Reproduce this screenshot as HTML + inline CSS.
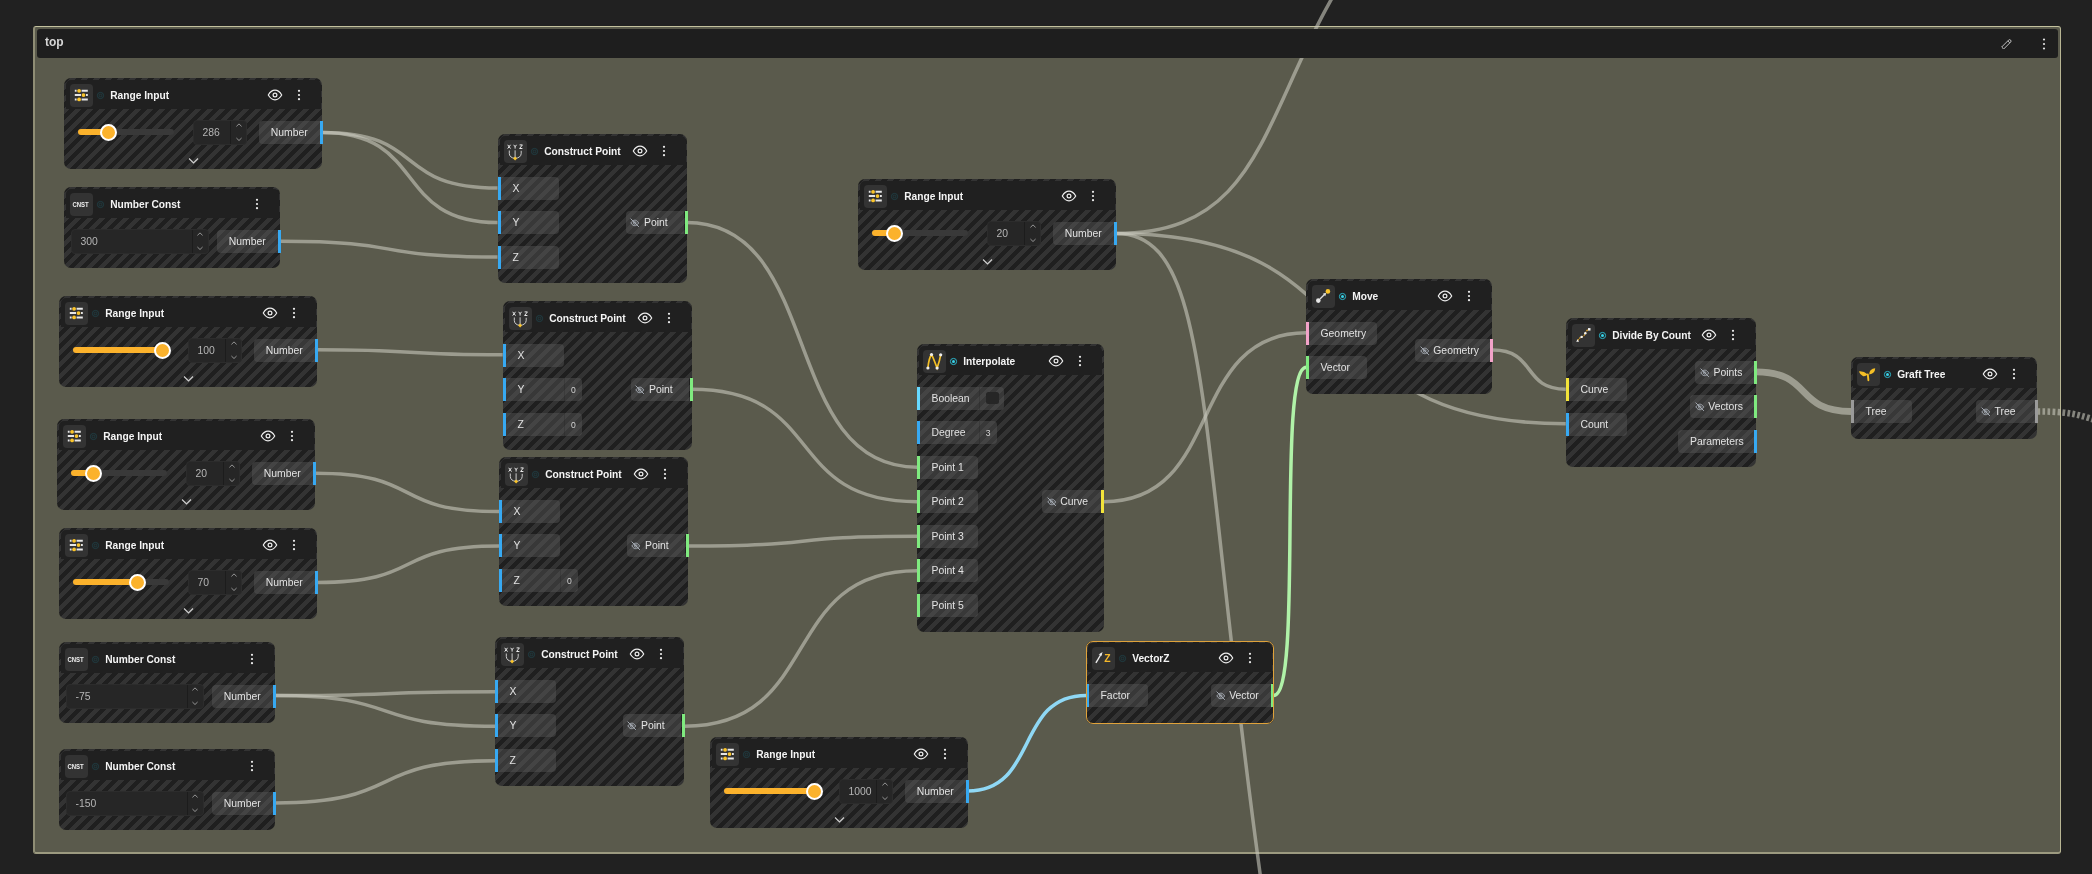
<!DOCTYPE html><html><head><meta charset="utf-8"><title>top</title><style>
*{box-sizing:border-box}
html,body{margin:0;padding:0;width:2092px;height:874px;overflow:hidden;background:#212121;font-family:"Liberation Sans",sans-serif;}
.abs{position:absolute}
.frame{position:absolute;left:33px;top:26px;width:2028px;height:828px;border-style:solid;border-color:#c4c29e #b8b694 #9c9a80 #8f8d75;border-width:1px 1px 2px 2px;border-radius:3px;background:#5a5a4c;}
.fhead{position:absolute;left:37px;top:29px;width:2021px;height:28.5px;background:#1e1e1e;border-radius:3px;z-index:3;will-change:transform}
.fhead .t{position:absolute;left:8px;top:5.8px;font-size:12px;font-weight:700;color:#d6d6d6}
svg.wires{position:absolute;left:0;top:0;z-index:2}
.node{position:absolute;border-radius:7px;will-change:transform;background:repeating-linear-gradient(135deg,#1f1f1f 0 4.25px,#333333 4.25px 8.5px);z-index:4}
.node.sel::after{content:'';position:absolute;left:0;top:0;right:0;bottom:0;border:1px solid #dfa23a;border-radius:7px;pointer-events:none}
.nh{position:absolute;left:1.5px;right:1.5px;top:2px;height:29px;background:#202020;border-radius:5px 5px 0 0}
.ic{position:absolute;left:4.1px;top:3.6px;width:23px;height:23px;border-radius:4px;background:#333333}
.ic svg{position:absolute;left:0;top:0}
.dot{position:absolute;left:29.2px;top:9.7px}
.title{position:absolute;left:44.7px;top:10px;font-size:10.2px;font-weight:700;color:#f4f4f4;white-space:nowrap;line-height:12px}
.eye{position:absolute;top:10px}
.keb{position:absolute;top:9px}
.sock{position:absolute;height:23px;font-size:10.4px;color:#e2e2e2;line-height:23px;white-space:nowrap;background:rgba(96,96,96,0.4)}
.sock.in{border-radius:0 4px 4px 0;padding-left:12px}
.sock.out{border-radius:4px 0 0 4px;padding-left:11.7px;text-align:left}
.sock.out.sl{padding-left:4.7px}
.port{position:absolute;width:3px;height:23px}
.vbox{position:absolute;height:23px;font-size:8.6px;color:#d6d6d6;line-height:24.5px;text-align:center;background:rgba(96,96,96,0.4);border-radius:0 4px 4px 0;border-left:1px solid rgba(0,0,0,0.13)}
.sock.in.hv{border-radius:0}
.field{position:absolute;height:25px;background:#262626;border-radius:4px;border:1px solid #2c2c2c}
.field .v{position:absolute;top:0;line-height:23px;font-size:10.4px;color:#b5b5b5}
.field .div{position:absolute;top:0;bottom:0;width:1px;background:#1c1c1c}
.track{position:absolute;height:6px;border-radius:3px;background:#393939}
.fill{position:absolute;height:6px;border-radius:3px;background:#fbb22c}
.knob{position:absolute;width:17px;height:17px;border-radius:50%;background:#fbb22c;border:2.8px solid #ffffff}
</style></head><body><div class="frame"></div><div class="fhead"><span class="t">top</span><svg class="abs" style="left:1963px;top:8px" width="13" height="13" viewBox="0 0 13 13"><path d="M3 11.3 L1.7 10 L8.6 3.1 Q9.6 2.1 10.6 3.1 Q11.6 4.1 10.6 5.1 L3.7 12 Z M7.8 3.9 L9.8 5.9" fill="none" stroke="#d0d0d0" stroke-width="0.9"/></svg><svg class="abs" style="left:2003.5px;top:7.5px" width="6" height="14" viewBox="0 0 6 14"><circle cx="3" cy="2.5" r="1.1" fill="#e0e0e0"/><circle cx="3" cy="7" r="1.1" fill="#e0e0e0"/><circle cx="3" cy="11.5" r="1.1" fill="#e0e0e0"/></svg></div><svg class="wires" width="2092" height="874" viewBox="0 0 2092 874"><path d="M322.4 132.5 C427.5 132.5 392.4 188.1 497.5 188.1" stroke="rgba(200,200,188,0.6)" stroke-width="3.5" fill="none" /><path d="M322.4 132.5 C427.5 132.5 392.4 222.6 497.5 222.6" stroke="rgba(200,200,188,0.6)" stroke-width="3.5" fill="none" /><path d="M280.4 241.2 C410.7 241.2 367.2 257.1 497.5 257.1" stroke="rgba(200,200,188,0.6)" stroke-width="3.5" fill="none" /><path d="M316.8 349.8 C428.3 349.8 391.2 354.8 502.7 354.8" stroke="rgba(200,200,188,0.6)" stroke-width="3.5" fill="none" /><path d="M314.9 473.2 C425.4 473.2 388.5 511.6 499.0 511.6" stroke="rgba(200,200,188,0.6)" stroke-width="3.5" fill="none" /><path d="M317.2 582.5 C426.3 582.5 389.9 546.1 499.0 546.1" stroke="rgba(200,200,188,0.6)" stroke-width="3.5" fill="none" /><path d="M275.2 695.6 C407.3 695.6 363.3 691.7 495.4 691.7" stroke="rgba(200,200,188,0.6)" stroke-width="3.5" fill="none" /><path d="M275.2 695.6 C407.3 695.6 363.3 726.2 495.4 726.2" stroke="rgba(200,200,188,0.6)" stroke-width="3.5" fill="none" /><path d="M275.2 802.9 C407.3 802.9 363.3 760.7 495.4 760.7" stroke="rgba(200,200,188,0.6)" stroke-width="3.5" fill="none" /><path d="M686.5 222.6 C825.0 222.6 778.8 467.2 917.3 467.2" stroke="rgba(200,200,188,0.6)" stroke-width="3.5" fill="none" /><path d="M691.7 389.3 C827.1 389.3 781.9 501.7 917.3 501.7" stroke="rgba(200,200,188,0.6)" stroke-width="3.5" fill="none" /><path d="M688.0 546.1 C825.6 546.1 779.7 536.2 917.3 536.2" stroke="rgba(200,200,188,0.6)" stroke-width="3.5" fill="none" /><path d="M684.4 726.2 C824.1 726.2 777.6 570.7 917.3 570.7" stroke="rgba(200,200,188,0.6)" stroke-width="3.5" fill="none" /><path d="M1103.8 501.7 C1225.4 501.7 1184.8 332.8 1306.4 332.8" stroke="rgba(200,200,188,0.6)" stroke-width="3.5" fill="none" /><path d="M1115.7 233.5 C1385.7 233.5 1295.7 423.7 1565.7 423.7" stroke="rgba(200,200,188,0.6)" stroke-width="3.5" fill="none" /><path d="M1273.6 695.4 C1303.6 695.4 1276.4 367.3 1306.4 367.3" stroke="#b0f2a8" stroke-width="3.5" fill="none" /><path d="M967.7 791.0 C1038.7 791.0 1015.1 695.4 1086.1 695.4" stroke="#8fd8f5" stroke-width="3.5" fill="none" /><path d="M1492.8 350.1 C1536.5 350.1 1522.0 389.2 1565.7 389.2" stroke="rgba(200,200,188,0.6)" stroke-width="3.5" fill="none" /><path d="M1755.8 371.9 C1813.1 371.9 1794.0 411.5 1851.3 411.5" stroke="rgba(200,200,188,0.6)" stroke-width="6.8" fill="none" /><path d="M1115.7 233.5 C1275.5 233.5 1259.6 92.9 1364.9 -53.6" stroke="rgba(200,200,188,0.6)" stroke-width="3.5" fill="none"/><path d="M1115.7 233.5 C1235.5 233.5 1182.1 507.6 1325.1 1275.7" stroke="rgba(200,200,188,0.6)" stroke-width="3.5" fill="none"/><path d="M2037.3999999999999 411.5 C2077.3999999999996 411.5 2080 415.5 2130 431.5" stroke="rgba(200,200,188,0.6)" stroke-width="6.5" fill="none" stroke-dasharray="2.7 2.3"/></svg><div class="node" style="left:64.4px;top:78.4px;width:258px;height:91px"><div class="nh"><div class="ic"><svg width="23" height="23" viewBox="0 0 23 23"><g stroke="#e6e6e6" stroke-width="2" stroke-linecap="butt"><path d="M4.8 6.8H6.6M11.6 6.8H17.8"/><path d="M4.8 11.1H11M16 11.1H17.8"/><path d="M4.8 15.4H6.6M11.6 15.4H17.8"/></g><g fill="#fbc52a"><circle cx="9.1" cy="6.8" r="1.9"/><circle cx="13.5" cy="11.1" r="1.9"/><circle cx="9.1" cy="15.4" r="1.9"/></g></svg></div><svg class="dot" width="11" height="11" viewBox="0 0 11 11"><circle cx="5.5" cy="5.5" r="3.1" fill="none" stroke="#1f4046" stroke-width="0.9"/><circle cx="5.5" cy="5.5" r="1.3" fill="none" stroke="#1f4046" stroke-width="0.8"/></svg><div class="title">Range Input</div></div><svg class="abs" style="left:202.5px;top:11px" width="16" height="12" viewBox="0 0 16 12"><path d="M1.3 6 C3.5 2.2 5.6 1.2 8 1.2 C10.4 1.2 12.5 2.2 14.7 6 C12.5 9.8 10.4 10.8 8 10.8 C5.6 10.8 3.5 9.8 1.3 6 Z" fill="none" stroke="#eeeeee" stroke-width="1.2"/><circle cx="8" cy="6" r="1.9" fill="none" stroke="#eeeeee" stroke-width="1.2"/></svg><svg class="abs" style="left:231.8px;top:10px" width="6" height="14" viewBox="0 0 6 14"><circle cx="3" cy="2.8" r="1.1" fill="#eeeeee"/><circle cx="3" cy="7" r="1.1" fill="#eeeeee"/><circle cx="3" cy="11.2" r="1.1" fill="#eeeeee"/></svg><div class="track" style="left:14px;top:51.1px;width:96px"></div><div class="fill" style="left:14px;top:51.1px;width:30px"></div><div class="knob" style="left:35.5px;top:45.6px"></div><div class="field" style="left:129px;top:41.6px;width:54px"><div class="v" style="left:8.5px">286</div><div class="div" style="left:36px"></div><svg class="abs" style="left:39.6px;top:-1px" width="10" height="25" viewBox="0 0 10 25"><path d="M2.4 6.4 L5 3.9 L7.6 6.4 M2.4 18 L5 20.5 L7.6 18" fill="none" stroke="#a0a0a0" stroke-width="0.9"/></svg></div><div class="port" style="left:255.5px;top:42.6px;background:#37a9f2"></div><div class="sock out" style="left:195.0px;top:42.6px;width:60.5px">Number</div><svg class="abs" style="left:123.5px;top:79px" width="11" height="8" viewBox="0 0 11 8"><path d="M1 1.5 L5.5 6 L10 1.5" fill="none" stroke="#d0d0d0" stroke-width="1.2"/></svg></div><div class="node" style="left:64.4px;top:187.2px;width:216px;height:81px"><div class="nh"><div class="ic"><svg width="23" height="23" viewBox="0 0 23 23"><text x="2.4" y="13.8" font-family="Liberation Sans" font-weight="700" font-size="8" fill="#eeeeee" textLength="16.4" lengthAdjust="spacingAndGlyphs">CNST</text></svg></div><svg class="dot" width="11" height="11" viewBox="0 0 11 11"><circle cx="5.5" cy="5.5" r="3.1" fill="none" stroke="#1f4046" stroke-width="0.9"/><circle cx="5.5" cy="5.5" r="1.3" fill="none" stroke="#1f4046" stroke-width="0.8"/></svg><div class="title">Number Const</div></div><svg class="abs" style="left:189.8px;top:10px" width="6" height="14" viewBox="0 0 6 14"><circle cx="3" cy="2.8" r="1.1" fill="#eeeeee"/><circle cx="3" cy="7" r="1.1" fill="#eeeeee"/><circle cx="3" cy="11.2" r="1.1" fill="#eeeeee"/></svg><div class="field" style="left:6.5px;top:41.5px;width:138px"><div class="v" style="left:9px">300</div><div class="div" style="left:120.5px"></div><svg class="abs" style="left:123.5px;top:-1px" width="10" height="25" viewBox="0 0 10 25"><path d="M2.4 6.4 L5 3.9 L7.6 6.4 M2.4 18 L5 20.5 L7.6 18" fill="none" stroke="#a0a0a0" stroke-width="0.9"/></svg></div><div class="port" style="left:213.5px;top:42.5px;background:#37a9f2"></div><div class="sock out" style="left:153.0px;top:42.5px;width:60.5px">Number</div></div><div class="node" style="left:58.8px;top:295.7px;width:258px;height:91px"><div class="nh"><div class="ic"><svg width="23" height="23" viewBox="0 0 23 23"><g stroke="#e6e6e6" stroke-width="2" stroke-linecap="butt"><path d="M4.8 6.8H6.6M11.6 6.8H17.8"/><path d="M4.8 11.1H11M16 11.1H17.8"/><path d="M4.8 15.4H6.6M11.6 15.4H17.8"/></g><g fill="#fbc52a"><circle cx="9.1" cy="6.8" r="1.9"/><circle cx="13.5" cy="11.1" r="1.9"/><circle cx="9.1" cy="15.4" r="1.9"/></g></svg></div><svg class="dot" width="11" height="11" viewBox="0 0 11 11"><circle cx="5.5" cy="5.5" r="3.1" fill="none" stroke="#1f4046" stroke-width="0.9"/><circle cx="5.5" cy="5.5" r="1.3" fill="none" stroke="#1f4046" stroke-width="0.8"/></svg><div class="title">Range Input</div></div><svg class="abs" style="left:202.5px;top:11px" width="16" height="12" viewBox="0 0 16 12"><path d="M1.3 6 C3.5 2.2 5.6 1.2 8 1.2 C10.4 1.2 12.5 2.2 14.7 6 C12.5 9.8 10.4 10.8 8 10.8 C5.6 10.8 3.5 9.8 1.3 6 Z" fill="none" stroke="#eeeeee" stroke-width="1.2"/><circle cx="8" cy="6" r="1.9" fill="none" stroke="#eeeeee" stroke-width="1.2"/></svg><svg class="abs" style="left:231.8px;top:10px" width="6" height="14" viewBox="0 0 6 14"><circle cx="3" cy="2.8" r="1.1" fill="#eeeeee"/><circle cx="3" cy="7" r="1.1" fill="#eeeeee"/><circle cx="3" cy="11.2" r="1.1" fill="#eeeeee"/></svg><div class="track" style="left:14px;top:51.1px;width:96px"></div><div class="fill" style="left:14px;top:51.1px;width:89.8px"></div><div class="knob" style="left:95.3px;top:45.6px"></div><div class="field" style="left:129px;top:41.6px;width:54px"><div class="v" style="left:8.5px">100</div><div class="div" style="left:36px"></div><svg class="abs" style="left:39.6px;top:-1px" width="10" height="25" viewBox="0 0 10 25"><path d="M2.4 6.4 L5 3.9 L7.6 6.4 M2.4 18 L5 20.5 L7.6 18" fill="none" stroke="#a0a0a0" stroke-width="0.9"/></svg></div><div class="port" style="left:255.5px;top:42.6px;background:#37a9f2"></div><div class="sock out" style="left:195.0px;top:42.6px;width:60.5px">Number</div><svg class="abs" style="left:123.5px;top:79px" width="11" height="8" viewBox="0 0 11 8"><path d="M1 1.5 L5.5 6 L10 1.5" fill="none" stroke="#d0d0d0" stroke-width="1.2"/></svg></div><div class="node" style="left:56.9px;top:419.1px;width:258px;height:91px"><div class="nh"><div class="ic"><svg width="23" height="23" viewBox="0 0 23 23"><g stroke="#e6e6e6" stroke-width="2" stroke-linecap="butt"><path d="M4.8 6.8H6.6M11.6 6.8H17.8"/><path d="M4.8 11.1H11M16 11.1H17.8"/><path d="M4.8 15.4H6.6M11.6 15.4H17.8"/></g><g fill="#fbc52a"><circle cx="9.1" cy="6.8" r="1.9"/><circle cx="13.5" cy="11.1" r="1.9"/><circle cx="9.1" cy="15.4" r="1.9"/></g></svg></div><svg class="dot" width="11" height="11" viewBox="0 0 11 11"><circle cx="5.5" cy="5.5" r="3.1" fill="none" stroke="#1f4046" stroke-width="0.9"/><circle cx="5.5" cy="5.5" r="1.3" fill="none" stroke="#1f4046" stroke-width="0.8"/></svg><div class="title">Range Input</div></div><svg class="abs" style="left:202.5px;top:11px" width="16" height="12" viewBox="0 0 16 12"><path d="M1.3 6 C3.5 2.2 5.6 1.2 8 1.2 C10.4 1.2 12.5 2.2 14.7 6 C12.5 9.8 10.4 10.8 8 10.8 C5.6 10.8 3.5 9.8 1.3 6 Z" fill="none" stroke="#eeeeee" stroke-width="1.2"/><circle cx="8" cy="6" r="1.9" fill="none" stroke="#eeeeee" stroke-width="1.2"/></svg><svg class="abs" style="left:231.8px;top:10px" width="6" height="14" viewBox="0 0 6 14"><circle cx="3" cy="2.8" r="1.1" fill="#eeeeee"/><circle cx="3" cy="7" r="1.1" fill="#eeeeee"/><circle cx="3" cy="11.2" r="1.1" fill="#eeeeee"/></svg><div class="track" style="left:14px;top:51.1px;width:96px"></div><div class="fill" style="left:14px;top:51.1px;width:22.5px"></div><div class="knob" style="left:28.0px;top:45.6px"></div><div class="field" style="left:129px;top:41.6px;width:54px"><div class="v" style="left:8.5px">20</div><div class="div" style="left:36px"></div><svg class="abs" style="left:39.6px;top:-1px" width="10" height="25" viewBox="0 0 10 25"><path d="M2.4 6.4 L5 3.9 L7.6 6.4 M2.4 18 L5 20.5 L7.6 18" fill="none" stroke="#a0a0a0" stroke-width="0.9"/></svg></div><div class="port" style="left:255.5px;top:42.6px;background:#37a9f2"></div><div class="sock out" style="left:195.0px;top:42.6px;width:60.5px">Number</div><svg class="abs" style="left:123.5px;top:79px" width="11" height="8" viewBox="0 0 11 8"><path d="M1 1.5 L5.5 6 L10 1.5" fill="none" stroke="#d0d0d0" stroke-width="1.2"/></svg></div><div class="node" style="left:59.2px;top:528.4px;width:258px;height:91px"><div class="nh"><div class="ic"><svg width="23" height="23" viewBox="0 0 23 23"><g stroke="#e6e6e6" stroke-width="2" stroke-linecap="butt"><path d="M4.8 6.8H6.6M11.6 6.8H17.8"/><path d="M4.8 11.1H11M16 11.1H17.8"/><path d="M4.8 15.4H6.6M11.6 15.4H17.8"/></g><g fill="#fbc52a"><circle cx="9.1" cy="6.8" r="1.9"/><circle cx="13.5" cy="11.1" r="1.9"/><circle cx="9.1" cy="15.4" r="1.9"/></g></svg></div><svg class="dot" width="11" height="11" viewBox="0 0 11 11"><circle cx="5.5" cy="5.5" r="3.1" fill="none" stroke="#1f4046" stroke-width="0.9"/><circle cx="5.5" cy="5.5" r="1.3" fill="none" stroke="#1f4046" stroke-width="0.8"/></svg><div class="title">Range Input</div></div><svg class="abs" style="left:202.5px;top:11px" width="16" height="12" viewBox="0 0 16 12"><path d="M1.3 6 C3.5 2.2 5.6 1.2 8 1.2 C10.4 1.2 12.5 2.2 14.7 6 C12.5 9.8 10.4 10.8 8 10.8 C5.6 10.8 3.5 9.8 1.3 6 Z" fill="none" stroke="#eeeeee" stroke-width="1.2"/><circle cx="8" cy="6" r="1.9" fill="none" stroke="#eeeeee" stroke-width="1.2"/></svg><svg class="abs" style="left:231.8px;top:10px" width="6" height="14" viewBox="0 0 6 14"><circle cx="3" cy="2.8" r="1.1" fill="#eeeeee"/><circle cx="3" cy="7" r="1.1" fill="#eeeeee"/><circle cx="3" cy="11.2" r="1.1" fill="#eeeeee"/></svg><div class="track" style="left:14px;top:51.1px;width:96px"></div><div class="fill" style="left:14px;top:51.1px;width:64.7px"></div><div class="knob" style="left:70.2px;top:45.6px"></div><div class="field" style="left:129px;top:41.6px;width:54px"><div class="v" style="left:8.5px">70</div><div class="div" style="left:36px"></div><svg class="abs" style="left:39.6px;top:-1px" width="10" height="25" viewBox="0 0 10 25"><path d="M2.4 6.4 L5 3.9 L7.6 6.4 M2.4 18 L5 20.5 L7.6 18" fill="none" stroke="#a0a0a0" stroke-width="0.9"/></svg></div><div class="port" style="left:255.5px;top:42.6px;background:#37a9f2"></div><div class="sock out" style="left:195.0px;top:42.6px;width:60.5px">Number</div><svg class="abs" style="left:123.5px;top:79px" width="11" height="8" viewBox="0 0 11 8"><path d="M1 1.5 L5.5 6 L10 1.5" fill="none" stroke="#d0d0d0" stroke-width="1.2"/></svg></div><div class="node" style="left:59.2px;top:641.6px;width:216px;height:81px"><div class="nh"><div class="ic"><svg width="23" height="23" viewBox="0 0 23 23"><text x="2.4" y="13.8" font-family="Liberation Sans" font-weight="700" font-size="8" fill="#eeeeee" textLength="16.4" lengthAdjust="spacingAndGlyphs">CNST</text></svg></div><svg class="dot" width="11" height="11" viewBox="0 0 11 11"><circle cx="5.5" cy="5.5" r="3.1" fill="none" stroke="#1f4046" stroke-width="0.9"/><circle cx="5.5" cy="5.5" r="1.3" fill="none" stroke="#1f4046" stroke-width="0.8"/></svg><div class="title">Number Const</div></div><svg class="abs" style="left:189.8px;top:10px" width="6" height="14" viewBox="0 0 6 14"><circle cx="3" cy="2.8" r="1.1" fill="#eeeeee"/><circle cx="3" cy="7" r="1.1" fill="#eeeeee"/><circle cx="3" cy="11.2" r="1.1" fill="#eeeeee"/></svg><div class="field" style="left:6.5px;top:41.5px;width:138px"><div class="v" style="left:9px">-75</div><div class="div" style="left:120.5px"></div><svg class="abs" style="left:123.5px;top:-1px" width="10" height="25" viewBox="0 0 10 25"><path d="M2.4 6.4 L5 3.9 L7.6 6.4 M2.4 18 L5 20.5 L7.6 18" fill="none" stroke="#a0a0a0" stroke-width="0.9"/></svg></div><div class="port" style="left:213.5px;top:42.5px;background:#37a9f2"></div><div class="sock out" style="left:153.0px;top:42.5px;width:60.5px">Number</div></div><div class="node" style="left:59.2px;top:748.9px;width:216px;height:81px"><div class="nh"><div class="ic"><svg width="23" height="23" viewBox="0 0 23 23"><text x="2.4" y="13.8" font-family="Liberation Sans" font-weight="700" font-size="8" fill="#eeeeee" textLength="16.4" lengthAdjust="spacingAndGlyphs">CNST</text></svg></div><svg class="dot" width="11" height="11" viewBox="0 0 11 11"><circle cx="5.5" cy="5.5" r="3.1" fill="none" stroke="#1f4046" stroke-width="0.9"/><circle cx="5.5" cy="5.5" r="1.3" fill="none" stroke="#1f4046" stroke-width="0.8"/></svg><div class="title">Number Const</div></div><svg class="abs" style="left:189.8px;top:10px" width="6" height="14" viewBox="0 0 6 14"><circle cx="3" cy="2.8" r="1.1" fill="#eeeeee"/><circle cx="3" cy="7" r="1.1" fill="#eeeeee"/><circle cx="3" cy="11.2" r="1.1" fill="#eeeeee"/></svg><div class="field" style="left:6.5px;top:41.5px;width:138px"><div class="v" style="left:9px">-150</div><div class="div" style="left:120.5px"></div><svg class="abs" style="left:123.5px;top:-1px" width="10" height="25" viewBox="0 0 10 25"><path d="M2.4 6.4 L5 3.9 L7.6 6.4 M2.4 18 L5 20.5 L7.6 18" fill="none" stroke="#a0a0a0" stroke-width="0.9"/></svg></div><div class="port" style="left:213.5px;top:42.5px;background:#37a9f2"></div><div class="sock out" style="left:153.0px;top:42.5px;width:60.5px">Number</div></div><div class="node" style="left:497.5px;top:133.8px;width:189px;height:149.3px"><div class="nh"><div class="ic"><svg width="23" height="23" viewBox="0 0 23 23"><path d="M3.7 4.8 L6.5 8.6 M6.5 4.8 L3.7 8.6 M9.7 4.8 L11.1 6.8 L12.5 4.8 M11.1 6.8 V8.6 M15.6 4.9 H18.4 L15.6 8.5 H18.4" fill="none" stroke="#e8e8e8" stroke-width="1"/><path d="M5.3 10.5 V13.5 Q5.5 17.8 11.1 18.4 Q16.9 17.8 17.2 13.5 V10.8 M11.1 10.3 V18" fill="none" stroke="#dddddd" stroke-width="0.9"/><rect x="9.7" y="17" width="2.8" height="2.8" transform="rotate(45 11.1 18.4)" fill="#fbc52a"/></svg></div><svg class="dot" width="11" height="11" viewBox="0 0 11 11"><circle cx="5.5" cy="5.5" r="3.1" fill="none" stroke="#1f4046" stroke-width="0.9"/><circle cx="5.5" cy="5.5" r="1.3" fill="none" stroke="#1f4046" stroke-width="0.8"/></svg><div class="title">Construct Point</div></div><svg class="abs" style="left:133.5px;top:11px" width="16" height="12" viewBox="0 0 16 12"><path d="M1.3 6 C3.5 2.2 5.6 1.2 8 1.2 C10.4 1.2 12.5 2.2 14.7 6 C12.5 9.8 10.4 10.8 8 10.8 C5.6 10.8 3.5 9.8 1.3 6 Z" fill="none" stroke="#eeeeee" stroke-width="1.2"/><circle cx="8" cy="6" r="1.9" fill="none" stroke="#eeeeee" stroke-width="1.2"/></svg><svg class="abs" style="left:162.8px;top:10px" width="6" height="14" viewBox="0 0 6 14"><circle cx="3" cy="2.8" r="1.1" fill="#eeeeee"/><circle cx="3" cy="7" r="1.1" fill="#eeeeee"/><circle cx="3" cy="11.2" r="1.1" fill="#eeeeee"/></svg><div class="port" style="left:-0.5px;top:42.8px;background:#37a9f2"></div><div class="sock in" style="left:2.5px;top:42.8px;width:58.7px">X</div><div class="port" style="left:-0.5px;top:77.3px;background:#37a9f2"></div><div class="sock in" style="left:2.5px;top:77.3px;width:58.7px">Y</div><div class="port" style="left:-0.5px;top:111.8px;background:#37a9f2"></div><div class="sock in" style="left:2.5px;top:111.8px;width:58.7px">Z</div><div class="port" style="left:186.5px;top:77.3px;background:#7fea7f"></div><div class="sock out sl" style="left:127.8px;top:77.3px;width:58.7px"><svg style="position:relative;top:1.5px;margin-right:4px" width="9.5" height="9.5" viewBox="0 0 10 10"><path d="M0.9 5.2 C2.4 2.9 3.7 2.3 5 2.3 C6.3 2.3 7.6 2.9 9.1 5.2 C7.6 7.5 6.3 8.1 5 8.1 C3.7 8.1 2.4 7.5 0.9 5.2Z" fill="none" stroke="#a3a9b1" stroke-width="1.05"/><circle cx="5" cy="5.2" r="1.3" fill="none" stroke="#a3a9b1" stroke-width="1.05"/><path d="M0.6 0.6 L9.4 9.4" stroke="#a3a9b1" stroke-width="1.05"/></svg>Point</div></div><div class="node" style="left:502.7px;top:300.5px;width:189px;height:149.3px"><div class="nh"><div class="ic"><svg width="23" height="23" viewBox="0 0 23 23"><path d="M3.7 4.8 L6.5 8.6 M6.5 4.8 L3.7 8.6 M9.7 4.8 L11.1 6.8 L12.5 4.8 M11.1 6.8 V8.6 M15.6 4.9 H18.4 L15.6 8.5 H18.4" fill="none" stroke="#e8e8e8" stroke-width="1"/><path d="M5.3 10.5 V13.5 Q5.5 17.8 11.1 18.4 Q16.9 17.8 17.2 13.5 V10.8 M11.1 10.3 V18" fill="none" stroke="#dddddd" stroke-width="0.9"/><rect x="9.7" y="17" width="2.8" height="2.8" transform="rotate(45 11.1 18.4)" fill="#fbc52a"/></svg></div><svg class="dot" width="11" height="11" viewBox="0 0 11 11"><circle cx="5.5" cy="5.5" r="3.1" fill="none" stroke="#1f4046" stroke-width="0.9"/><circle cx="5.5" cy="5.5" r="1.3" fill="none" stroke="#1f4046" stroke-width="0.8"/></svg><div class="title">Construct Point</div></div><svg class="abs" style="left:133.5px;top:11px" width="16" height="12" viewBox="0 0 16 12"><path d="M1.3 6 C3.5 2.2 5.6 1.2 8 1.2 C10.4 1.2 12.5 2.2 14.7 6 C12.5 9.8 10.4 10.8 8 10.8 C5.6 10.8 3.5 9.8 1.3 6 Z" fill="none" stroke="#eeeeee" stroke-width="1.2"/><circle cx="8" cy="6" r="1.9" fill="none" stroke="#eeeeee" stroke-width="1.2"/></svg><svg class="abs" style="left:162.8px;top:10px" width="6" height="14" viewBox="0 0 6 14"><circle cx="3" cy="2.8" r="1.1" fill="#eeeeee"/><circle cx="3" cy="7" r="1.1" fill="#eeeeee"/><circle cx="3" cy="11.2" r="1.1" fill="#eeeeee"/></svg><div class="port" style="left:-0.5px;top:42.8px;background:#37a9f2"></div><div class="sock in" style="left:2.5px;top:42.8px;width:58.7px">X</div><div class="port" style="left:-0.5px;top:77.3px;background:#37a9f2"></div><div class="sock in hv" style="left:2.5px;top:77.3px;width:58.7px">Y</div><div class="vbox" style="left:61.2px;top:77.3px;width:17.6px">0</div><div class="port" style="left:-0.5px;top:111.8px;background:#37a9f2"></div><div class="sock in hv" style="left:2.5px;top:111.8px;width:58.7px">Z</div><div class="vbox" style="left:61.2px;top:111.8px;width:17.6px">0</div><div class="port" style="left:186.5px;top:77.3px;background:#7fea7f"></div><div class="sock out sl" style="left:127.8px;top:77.3px;width:58.7px"><svg style="position:relative;top:1.5px;margin-right:4px" width="9.5" height="9.5" viewBox="0 0 10 10"><path d="M0.9 5.2 C2.4 2.9 3.7 2.3 5 2.3 C6.3 2.3 7.6 2.9 9.1 5.2 C7.6 7.5 6.3 8.1 5 8.1 C3.7 8.1 2.4 7.5 0.9 5.2Z" fill="none" stroke="#a3a9b1" stroke-width="1.05"/><circle cx="5" cy="5.2" r="1.3" fill="none" stroke="#a3a9b1" stroke-width="1.05"/><path d="M0.6 0.6 L9.4 9.4" stroke="#a3a9b1" stroke-width="1.05"/></svg>Point</div></div><div class="node" style="left:499.0px;top:457.3px;width:189px;height:149.3px"><div class="nh"><div class="ic"><svg width="23" height="23" viewBox="0 0 23 23"><path d="M3.7 4.8 L6.5 8.6 M6.5 4.8 L3.7 8.6 M9.7 4.8 L11.1 6.8 L12.5 4.8 M11.1 6.8 V8.6 M15.6 4.9 H18.4 L15.6 8.5 H18.4" fill="none" stroke="#e8e8e8" stroke-width="1"/><path d="M5.3 10.5 V13.5 Q5.5 17.8 11.1 18.4 Q16.9 17.8 17.2 13.5 V10.8 M11.1 10.3 V18" fill="none" stroke="#dddddd" stroke-width="0.9"/><rect x="9.7" y="17" width="2.8" height="2.8" transform="rotate(45 11.1 18.4)" fill="#fbc52a"/></svg></div><svg class="dot" width="11" height="11" viewBox="0 0 11 11"><circle cx="5.5" cy="5.5" r="3.1" fill="none" stroke="#1f4046" stroke-width="0.9"/><circle cx="5.5" cy="5.5" r="1.3" fill="none" stroke="#1f4046" stroke-width="0.8"/></svg><div class="title">Construct Point</div></div><svg class="abs" style="left:133.5px;top:11px" width="16" height="12" viewBox="0 0 16 12"><path d="M1.3 6 C3.5 2.2 5.6 1.2 8 1.2 C10.4 1.2 12.5 2.2 14.7 6 C12.5 9.8 10.4 10.8 8 10.8 C5.6 10.8 3.5 9.8 1.3 6 Z" fill="none" stroke="#eeeeee" stroke-width="1.2"/><circle cx="8" cy="6" r="1.9" fill="none" stroke="#eeeeee" stroke-width="1.2"/></svg><svg class="abs" style="left:162.8px;top:10px" width="6" height="14" viewBox="0 0 6 14"><circle cx="3" cy="2.8" r="1.1" fill="#eeeeee"/><circle cx="3" cy="7" r="1.1" fill="#eeeeee"/><circle cx="3" cy="11.2" r="1.1" fill="#eeeeee"/></svg><div class="port" style="left:-0.5px;top:42.8px;background:#37a9f2"></div><div class="sock in" style="left:2.5px;top:42.8px;width:58.7px">X</div><div class="port" style="left:-0.5px;top:77.3px;background:#37a9f2"></div><div class="sock in" style="left:2.5px;top:77.3px;width:58.7px">Y</div><div class="port" style="left:-0.5px;top:111.8px;background:#37a9f2"></div><div class="sock in hv" style="left:2.5px;top:111.8px;width:58.7px">Z</div><div class="vbox" style="left:61.2px;top:111.8px;width:17.6px">0</div><div class="port" style="left:186.5px;top:77.3px;background:#7fea7f"></div><div class="sock out sl" style="left:127.8px;top:77.3px;width:58.7px"><svg style="position:relative;top:1.5px;margin-right:4px" width="9.5" height="9.5" viewBox="0 0 10 10"><path d="M0.9 5.2 C2.4 2.9 3.7 2.3 5 2.3 C6.3 2.3 7.6 2.9 9.1 5.2 C7.6 7.5 6.3 8.1 5 8.1 C3.7 8.1 2.4 7.5 0.9 5.2Z" fill="none" stroke="#a3a9b1" stroke-width="1.05"/><circle cx="5" cy="5.2" r="1.3" fill="none" stroke="#a3a9b1" stroke-width="1.05"/><path d="M0.6 0.6 L9.4 9.4" stroke="#a3a9b1" stroke-width="1.05"/></svg>Point</div></div><div class="node" style="left:495.4px;top:637.4px;width:189px;height:149.3px"><div class="nh"><div class="ic"><svg width="23" height="23" viewBox="0 0 23 23"><path d="M3.7 4.8 L6.5 8.6 M6.5 4.8 L3.7 8.6 M9.7 4.8 L11.1 6.8 L12.5 4.8 M11.1 6.8 V8.6 M15.6 4.9 H18.4 L15.6 8.5 H18.4" fill="none" stroke="#e8e8e8" stroke-width="1"/><path d="M5.3 10.5 V13.5 Q5.5 17.8 11.1 18.4 Q16.9 17.8 17.2 13.5 V10.8 M11.1 10.3 V18" fill="none" stroke="#dddddd" stroke-width="0.9"/><rect x="9.7" y="17" width="2.8" height="2.8" transform="rotate(45 11.1 18.4)" fill="#fbc52a"/></svg></div><svg class="dot" width="11" height="11" viewBox="0 0 11 11"><circle cx="5.5" cy="5.5" r="3.1" fill="none" stroke="#1f4046" stroke-width="0.9"/><circle cx="5.5" cy="5.5" r="1.3" fill="none" stroke="#1f4046" stroke-width="0.8"/></svg><div class="title">Construct Point</div></div><svg class="abs" style="left:133.5px;top:11px" width="16" height="12" viewBox="0 0 16 12"><path d="M1.3 6 C3.5 2.2 5.6 1.2 8 1.2 C10.4 1.2 12.5 2.2 14.7 6 C12.5 9.8 10.4 10.8 8 10.8 C5.6 10.8 3.5 9.8 1.3 6 Z" fill="none" stroke="#eeeeee" stroke-width="1.2"/><circle cx="8" cy="6" r="1.9" fill="none" stroke="#eeeeee" stroke-width="1.2"/></svg><svg class="abs" style="left:162.8px;top:10px" width="6" height="14" viewBox="0 0 6 14"><circle cx="3" cy="2.8" r="1.1" fill="#eeeeee"/><circle cx="3" cy="7" r="1.1" fill="#eeeeee"/><circle cx="3" cy="11.2" r="1.1" fill="#eeeeee"/></svg><div class="port" style="left:-0.5px;top:42.8px;background:#37a9f2"></div><div class="sock in" style="left:2.5px;top:42.8px;width:58.7px">X</div><div class="port" style="left:-0.5px;top:77.3px;background:#37a9f2"></div><div class="sock in" style="left:2.5px;top:77.3px;width:58.7px">Y</div><div class="port" style="left:-0.5px;top:111.8px;background:#37a9f2"></div><div class="sock in" style="left:2.5px;top:111.8px;width:58.7px">Z</div><div class="port" style="left:186.5px;top:77.3px;background:#7fea7f"></div><div class="sock out sl" style="left:127.8px;top:77.3px;width:58.7px"><svg style="position:relative;top:1.5px;margin-right:4px" width="9.5" height="9.5" viewBox="0 0 10 10"><path d="M0.9 5.2 C2.4 2.9 3.7 2.3 5 2.3 C6.3 2.3 7.6 2.9 9.1 5.2 C7.6 7.5 6.3 8.1 5 8.1 C3.7 8.1 2.4 7.5 0.9 5.2Z" fill="none" stroke="#a3a9b1" stroke-width="1.05"/><circle cx="5" cy="5.2" r="1.3" fill="none" stroke="#a3a9b1" stroke-width="1.05"/><path d="M0.6 0.6 L9.4 9.4" stroke="#a3a9b1" stroke-width="1.05"/></svg>Point</div></div><div class="node" style="left:857.7px;top:179.4px;width:258px;height:91px"><div class="nh"><div class="ic"><svg width="23" height="23" viewBox="0 0 23 23"><g stroke="#e6e6e6" stroke-width="2" stroke-linecap="butt"><path d="M4.8 6.8H6.6M11.6 6.8H17.8"/><path d="M4.8 11.1H11M16 11.1H17.8"/><path d="M4.8 15.4H6.6M11.6 15.4H17.8"/></g><g fill="#fbc52a"><circle cx="9.1" cy="6.8" r="1.9"/><circle cx="13.5" cy="11.1" r="1.9"/><circle cx="9.1" cy="15.4" r="1.9"/></g></svg></div><svg class="dot" width="11" height="11" viewBox="0 0 11 11"><circle cx="5.5" cy="5.5" r="3.1" fill="none" stroke="#1f4046" stroke-width="0.9"/><circle cx="5.5" cy="5.5" r="1.3" fill="none" stroke="#1f4046" stroke-width="0.8"/></svg><div class="title">Range Input</div></div><svg class="abs" style="left:202.5px;top:11px" width="16" height="12" viewBox="0 0 16 12"><path d="M1.3 6 C3.5 2.2 5.6 1.2 8 1.2 C10.4 1.2 12.5 2.2 14.7 6 C12.5 9.8 10.4 10.8 8 10.8 C5.6 10.8 3.5 9.8 1.3 6 Z" fill="none" stroke="#eeeeee" stroke-width="1.2"/><circle cx="8" cy="6" r="1.9" fill="none" stroke="#eeeeee" stroke-width="1.2"/></svg><svg class="abs" style="left:231.8px;top:10px" width="6" height="14" viewBox="0 0 6 14"><circle cx="3" cy="2.8" r="1.1" fill="#eeeeee"/><circle cx="3" cy="7" r="1.1" fill="#eeeeee"/><circle cx="3" cy="11.2" r="1.1" fill="#eeeeee"/></svg><div class="track" style="left:14px;top:51.1px;width:96px"></div><div class="fill" style="left:14px;top:51.1px;width:22.799999999999997px"></div><div class="knob" style="left:28.299999999999997px;top:45.6px"></div><div class="field" style="left:129px;top:41.6px;width:54px"><div class="v" style="left:8.5px">20</div><div class="div" style="left:36px"></div><svg class="abs" style="left:39.6px;top:-1px" width="10" height="25" viewBox="0 0 10 25"><path d="M2.4 6.4 L5 3.9 L7.6 6.4 M2.4 18 L5 20.5 L7.6 18" fill="none" stroke="#a0a0a0" stroke-width="0.9"/></svg></div><div class="port" style="left:255.5px;top:42.6px;background:#37a9f2"></div><div class="sock out" style="left:195.0px;top:42.6px;width:60.5px">Number</div><svg class="abs" style="left:123.5px;top:79px" width="11" height="8" viewBox="0 0 11 8"><path d="M1 1.5 L5.5 6 L10 1.5" fill="none" stroke="#d0d0d0" stroke-width="1.2"/></svg></div><div class="node" style="left:709.7px;top:736.9px;width:258px;height:91px"><div class="nh"><div class="ic"><svg width="23" height="23" viewBox="0 0 23 23"><g stroke="#e6e6e6" stroke-width="2" stroke-linecap="butt"><path d="M4.8 6.8H6.6M11.6 6.8H17.8"/><path d="M4.8 11.1H11M16 11.1H17.8"/><path d="M4.8 15.4H6.6M11.6 15.4H17.8"/></g><g fill="#fbc52a"><circle cx="9.1" cy="6.8" r="1.9"/><circle cx="13.5" cy="11.1" r="1.9"/><circle cx="9.1" cy="15.4" r="1.9"/></g></svg></div><svg class="dot" width="11" height="11" viewBox="0 0 11 11"><circle cx="5.5" cy="5.5" r="3.1" fill="none" stroke="#1f4046" stroke-width="0.9"/><circle cx="5.5" cy="5.5" r="1.3" fill="none" stroke="#1f4046" stroke-width="0.8"/></svg><div class="title">Range Input</div></div><svg class="abs" style="left:202.5px;top:11px" width="16" height="12" viewBox="0 0 16 12"><path d="M1.3 6 C3.5 2.2 5.6 1.2 8 1.2 C10.4 1.2 12.5 2.2 14.7 6 C12.5 9.8 10.4 10.8 8 10.8 C5.6 10.8 3.5 9.8 1.3 6 Z" fill="none" stroke="#eeeeee" stroke-width="1.2"/><circle cx="8" cy="6" r="1.9" fill="none" stroke="#eeeeee" stroke-width="1.2"/></svg><svg class="abs" style="left:231.8px;top:10px" width="6" height="14" viewBox="0 0 6 14"><circle cx="3" cy="2.8" r="1.1" fill="#eeeeee"/><circle cx="3" cy="7" r="1.1" fill="#eeeeee"/><circle cx="3" cy="11.2" r="1.1" fill="#eeeeee"/></svg><div class="track" style="left:14px;top:51.1px;width:96px"></div><div class="fill" style="left:14px;top:51.1px;width:90.3px"></div><div class="knob" style="left:95.8px;top:45.6px"></div><div class="field" style="left:129px;top:41.6px;width:54px"><div class="v" style="left:8.5px">1000</div><div class="div" style="left:36px"></div><svg class="abs" style="left:39.6px;top:-1px" width="10" height="25" viewBox="0 0 10 25"><path d="M2.4 6.4 L5 3.9 L7.6 6.4 M2.4 18 L5 20.5 L7.6 18" fill="none" stroke="#a0a0a0" stroke-width="0.9"/></svg></div><div class="port" style="left:255.5px;top:42.6px;background:#37a9f2"></div><div class="sock out" style="left:195.0px;top:42.6px;width:60.5px">Number</div><svg class="abs" style="left:123.5px;top:79px" width="11" height="8" viewBox="0 0 11 8"><path d="M1 1.5 L5.5 6 L10 1.5" fill="none" stroke="#d0d0d0" stroke-width="1.2"/></svg></div><div class="node" style="left:917.3px;top:343.9px;width:186.5px;height:287.5px"><div class="nh"><div class="ic"><svg width="23" height="23" viewBox="0 0 23 23"><path d="M4.9 18 C5.5 12 6.5 7 8.5 4.6 C10.5 8 12.5 14 14.1 18 C15.5 14 17 9 17.7 4.8" fill="none" stroke="#f5c025" stroke-width="1.7"/><g fill="#eeeeee"><circle cx="4.9" cy="18" r="1.6"/><circle cx="8.5" cy="4.6" r="1.6"/><circle cx="14.1" cy="18" r="1.6"/><circle cx="17.7" cy="4.8" r="1.6"/></g></svg></div><svg class="dot" width="11" height="11" viewBox="0 0 11 11"><circle cx="5.5" cy="5.5" r="3.1" fill="none" stroke="#2cb4c9" stroke-width="1"/><circle cx="5.5" cy="5.5" r="1.5" fill="#38d2e8"/></svg><div class="title">Interpolate</div></div><svg class="abs" style="left:131.0px;top:11px" width="16" height="12" viewBox="0 0 16 12"><path d="M1.3 6 C3.5 2.2 5.6 1.2 8 1.2 C10.4 1.2 12.5 2.2 14.7 6 C12.5 9.8 10.4 10.8 8 10.8 C5.6 10.8 3.5 9.8 1.3 6 Z" fill="none" stroke="#eeeeee" stroke-width="1.2"/><circle cx="8" cy="6" r="1.9" fill="none" stroke="#eeeeee" stroke-width="1.2"/></svg><svg class="abs" style="left:160.3px;top:10px" width="6" height="14" viewBox="0 0 6 14"><circle cx="3" cy="2.8" r="1.1" fill="#eeeeee"/><circle cx="3" cy="7" r="1.1" fill="#eeeeee"/><circle cx="3" cy="11.2" r="1.1" fill="#eeeeee"/></svg><div class="port" style="left:-0.5px;top:42.8px;background:#66d9ff"></div><div class="sock in hv" style="left:2.5px;top:42.8px;width:59.5px">Boolean</div><div class="vbox" style="left:62px;top:42.8px;width:24.5px"><div style="position:absolute;left:5.5px;top:5px;width:13px;height:12.5px;border-radius:2.5px;background:#262626"></div></div><div class="port" style="left:-0.5px;top:77.3px;background:#37a9f2"></div><div class="sock in hv" style="left:2.5px;top:77.3px;width:59.5px">Degree</div><div class="vbox" style="left:62px;top:77.3px;width:17.5px">3</div><div class="port" style="left:-0.5px;top:111.8px;background:#7fea7f"></div><div class="sock in" style="left:2.5px;top:111.8px;width:58.7px">Point 1</div><div class="port" style="left:-0.5px;top:146.3px;background:#7fea7f"></div><div class="sock in" style="left:2.5px;top:146.3px;width:58.7px">Point 2</div><div class="port" style="left:-0.5px;top:180.8px;background:#7fea7f"></div><div class="sock in" style="left:2.5px;top:180.8px;width:58.7px">Point 3</div><div class="port" style="left:-0.5px;top:215.3px;background:#7fea7f"></div><div class="sock in" style="left:2.5px;top:215.3px;width:58.7px">Point 4</div><div class="port" style="left:-0.5px;top:249.8px;background:#7fea7f"></div><div class="sock in" style="left:2.5px;top:249.8px;width:58.7px">Point 5</div><div class="port" style="left:184.0px;top:146.3px;background:#f2e33a"></div><div class="sock out sl" style="left:125.0px;top:146.3px;width:59px"><svg style="position:relative;top:1.5px;margin-right:4px" width="9.5" height="9.5" viewBox="0 0 10 10"><path d="M0.9 5.2 C2.4 2.9 3.7 2.3 5 2.3 C6.3 2.3 7.6 2.9 9.1 5.2 C7.6 7.5 6.3 8.1 5 8.1 C3.7 8.1 2.4 7.5 0.9 5.2Z" fill="none" stroke="#a3a9b1" stroke-width="1.05"/><circle cx="5" cy="5.2" r="1.3" fill="none" stroke="#a3a9b1" stroke-width="1.05"/><path d="M0.6 0.6 L9.4 9.4" stroke="#a3a9b1" stroke-width="1.05"/></svg>Curve</div></div><div class="node" style="left:1306.4px;top:278.5px;width:186.4px;height:115px"><div class="nh"><div class="ic"><svg width="23" height="23" viewBox="0 0 23 23"><path d="M8 14 L13.2 8.8" stroke="#dddddd" stroke-width="1.3"/><path d="M10.8 8.7 L14.2 7.8 L13.3 11.2Z" fill="#dddddd"/><circle cx="6.3" cy="15.6" r="2.3" fill="#e6e6e6"/><circle cx="15.9" cy="6.4" r="2.3" fill="#fbc52a"/></svg></div><svg class="dot" width="11" height="11" viewBox="0 0 11 11"><circle cx="5.5" cy="5.5" r="3.1" fill="none" stroke="#2cb4c9" stroke-width="1"/><circle cx="5.5" cy="5.5" r="1.5" fill="#38d2e8"/></svg><div class="title">Move</div></div><svg class="abs" style="left:130.9px;top:11px" width="16" height="12" viewBox="0 0 16 12"><path d="M1.3 6 C3.5 2.2 5.6 1.2 8 1.2 C10.4 1.2 12.5 2.2 14.7 6 C12.5 9.8 10.4 10.8 8 10.8 C5.6 10.8 3.5 9.8 1.3 6 Z" fill="none" stroke="#eeeeee" stroke-width="1.2"/><circle cx="8" cy="6" r="1.9" fill="none" stroke="#eeeeee" stroke-width="1.2"/></svg><svg class="abs" style="left:160.20000000000002px;top:10px" width="6" height="14" viewBox="0 0 6 14"><circle cx="3" cy="2.8" r="1.1" fill="#eeeeee"/><circle cx="3" cy="7" r="1.1" fill="#eeeeee"/><circle cx="3" cy="11.2" r="1.1" fill="#eeeeee"/></svg><div class="port" style="left:-0.5px;top:42.8px;background:#f3a3c9"></div><div class="sock in" style="left:2.5px;top:42.8px;width:68.4px">Geometry</div><div class="port" style="left:-0.5px;top:77.3px;background:#7fea7f"></div><div class="sock in" style="left:2.5px;top:77.3px;width:58.6px">Vector</div><div class="port" style="left:183.9px;top:60.05px;background:#f3a3c9"></div><div class="sock out sl" style="left:109.10000000000001px;top:60.05px;width:74.8px"><svg style="position:relative;top:1.5px;margin-right:4px" width="9.5" height="9.5" viewBox="0 0 10 10"><path d="M0.9 5.2 C2.4 2.9 3.7 2.3 5 2.3 C6.3 2.3 7.6 2.9 9.1 5.2 C7.6 7.5 6.3 8.1 5 8.1 C3.7 8.1 2.4 7.5 0.9 5.2Z" fill="none" stroke="#a3a9b1" stroke-width="1.05"/><circle cx="5" cy="5.2" r="1.3" fill="none" stroke="#a3a9b1" stroke-width="1.05"/><path d="M0.6 0.6 L9.4 9.4" stroke="#a3a9b1" stroke-width="1.05"/></svg>Geometry</div></div><div class="node" style="left:1565.7px;top:317.6px;width:190.1px;height:148.7px"><div class="nh"><div class="ic"><svg width="23" height="23" viewBox="0 0 23 23"><path d="M5.6 16.9 Q7 14 9.6 12.9 Q12.5 12 13.3 9.2 Q14.5 6 17.2 5.3" fill="none" stroke="#e0a52a" stroke-width="1.2" stroke-dasharray="1.8 0.9"/><g fill="#f2f2f2"><path d="M5.6 15.3 L7 17.8 L4.2 17.8Z"/><circle cx="9.6" cy="12.9" r="1.2"/><circle cx="13.3" cy="9.2" r="1.2"/><rect x="16" y="4.1" width="2.5" height="2.5"/></g></svg></div><svg class="dot" width="11" height="11" viewBox="0 0 11 11"><circle cx="5.5" cy="5.5" r="3.1" fill="none" stroke="#2cb4c9" stroke-width="1"/><circle cx="5.5" cy="5.5" r="1.5" fill="#38d2e8"/></svg><div class="title">Divide By Count</div></div><svg class="abs" style="left:134.6px;top:11px" width="16" height="12" viewBox="0 0 16 12"><path d="M1.3 6 C3.5 2.2 5.6 1.2 8 1.2 C10.4 1.2 12.5 2.2 14.7 6 C12.5 9.8 10.4 10.8 8 10.8 C5.6 10.8 3.5 9.8 1.3 6 Z" fill="none" stroke="#eeeeee" stroke-width="1.2"/><circle cx="8" cy="6" r="1.9" fill="none" stroke="#eeeeee" stroke-width="1.2"/></svg><svg class="abs" style="left:163.9px;top:10px" width="6" height="14" viewBox="0 0 6 14"><circle cx="3" cy="2.8" r="1.1" fill="#eeeeee"/><circle cx="3" cy="7" r="1.1" fill="#eeeeee"/><circle cx="3" cy="11.2" r="1.1" fill="#eeeeee"/></svg><div class="port" style="left:-0.5px;top:60.05px;background:#f2e33a"></div><div class="sock in" style="left:2.5px;top:60.05px;width:58.3px">Curve</div><div class="port" style="left:-0.5px;top:94.55px;background:#37a9f2"></div><div class="sock in" style="left:2.5px;top:94.55px;width:58.3px">Count</div><div class="port" style="left:187.6px;top:42.8px;background:#7fea7f"></div><div class="sock out sl" style="left:129.3px;top:42.8px;width:58.3px"><svg style="position:relative;top:1.5px;margin-right:4px" width="9.5" height="9.5" viewBox="0 0 10 10"><path d="M0.9 5.2 C2.4 2.9 3.7 2.3 5 2.3 C6.3 2.3 7.6 2.9 9.1 5.2 C7.6 7.5 6.3 8.1 5 8.1 C3.7 8.1 2.4 7.5 0.9 5.2Z" fill="none" stroke="#a3a9b1" stroke-width="1.05"/><circle cx="5" cy="5.2" r="1.3" fill="none" stroke="#a3a9b1" stroke-width="1.05"/><path d="M0.6 0.6 L9.4 9.4" stroke="#a3a9b1" stroke-width="1.05"/></svg>Points</div><div class="port" style="left:187.6px;top:77.3px;background:#7fea7f"></div><div class="sock out sl" style="left:124.1px;top:77.3px;width:63.5px"><svg style="position:relative;top:1.5px;margin-right:4px" width="9.5" height="9.5" viewBox="0 0 10 10"><path d="M0.9 5.2 C2.4 2.9 3.7 2.3 5 2.3 C6.3 2.3 7.6 2.9 9.1 5.2 C7.6 7.5 6.3 8.1 5 8.1 C3.7 8.1 2.4 7.5 0.9 5.2Z" fill="none" stroke="#a3a9b1" stroke-width="1.05"/><circle cx="5" cy="5.2" r="1.3" fill="none" stroke="#a3a9b1" stroke-width="1.05"/><path d="M0.6 0.6 L9.4 9.4" stroke="#a3a9b1" stroke-width="1.05"/></svg>Vectors</div><div class="port" style="left:187.6px;top:111.8px;background:#37a9f2"></div><div class="sock out" style="left:112.3px;top:111.8px;width:75.3px">Parameters</div></div><div class="node" style="left:1851.3px;top:357.2px;width:186.1px;height:81.9px"><div class="nh"><div class="ic"><svg width="23" height="23" viewBox="0 0 23 23"><g fill="#f5bf26"><path d="M1.9 8.4 Q6.5 7.8 10.8 11.6 Q8 13.8 5.8 13 Q3.2 11.8 1.9 8.4 Z"/><path d="M18.2 5.3 Q18 10.8 12.2 11.6 Q12.2 8.6 13.6 7.3 Q15.6 5.5 18.2 5.3 Z"/></g><path d="M10.8 11.4 L11.4 17.2" stroke="#f5bf26" stroke-width="1.9" stroke-linecap="round"/></svg></div><svg class="dot" width="11" height="11" viewBox="0 0 11 11"><circle cx="5.5" cy="5.5" r="3.1" fill="none" stroke="#2cb4c9" stroke-width="1"/><circle cx="5.5" cy="5.5" r="1.5" fill="#38d2e8"/></svg><div class="title">Graft Tree</div></div><svg class="abs" style="left:130.6px;top:11px" width="16" height="12" viewBox="0 0 16 12"><path d="M1.3 6 C3.5 2.2 5.6 1.2 8 1.2 C10.4 1.2 12.5 2.2 14.7 6 C12.5 9.8 10.4 10.8 8 10.8 C5.6 10.8 3.5 9.8 1.3 6 Z" fill="none" stroke="#eeeeee" stroke-width="1.2"/><circle cx="8" cy="6" r="1.9" fill="none" stroke="#eeeeee" stroke-width="1.2"/></svg><svg class="abs" style="left:159.9px;top:10px" width="6" height="14" viewBox="0 0 6 14"><circle cx="3" cy="2.8" r="1.1" fill="#eeeeee"/><circle cx="3" cy="7" r="1.1" fill="#eeeeee"/><circle cx="3" cy="11.2" r="1.1" fill="#eeeeee"/></svg><div class="port" style="left:-0.5px;top:42.8px;background:#9a9a9a"></div><div class="sock in" style="left:2.5px;top:42.8px;width:58.8px">Tree</div><div class="port" style="left:183.6px;top:42.8px;background:#9a9a9a"></div><div class="sock out sl" style="left:125.39999999999999px;top:42.8px;width:58.2px"><svg style="position:relative;top:1.5px;margin-right:4px" width="9.5" height="9.5" viewBox="0 0 10 10"><path d="M0.9 5.2 C2.4 2.9 3.7 2.3 5 2.3 C6.3 2.3 7.6 2.9 9.1 5.2 C7.6 7.5 6.3 8.1 5 8.1 C3.7 8.1 2.4 7.5 0.9 5.2Z" fill="none" stroke="#a3a9b1" stroke-width="1.05"/><circle cx="5" cy="5.2" r="1.3" fill="none" stroke="#a3a9b1" stroke-width="1.05"/><path d="M0.6 0.6 L9.4 9.4" stroke="#a3a9b1" stroke-width="1.05"/></svg>Tree</div></div><div class="node sel" style="left:1086.1px;top:641.1px;width:187.5px;height:83.3px"><div class="nh"><div class="ic"><svg width="23" height="23" viewBox="0 0 23 23"><path d="M3.9 15.9 L9.2 7" stroke="#eeeeee" stroke-width="1.4"/><path d="M10.6 5 L6.6 7.4 L8.6 7.9 L9.3 9.3 Z" fill="#eeeeee"/><text x="12.2" y="15.1" font-family="Liberation Sans" font-weight="700" font-size="10.4" fill="#f5b82a">Z</text></svg></div><svg class="dot" width="11" height="11" viewBox="0 0 11 11"><circle cx="5.5" cy="5.5" r="3.1" fill="none" stroke="#1f4046" stroke-width="0.9"/><circle cx="5.5" cy="5.5" r="1.3" fill="none" stroke="#1f4046" stroke-width="0.8"/></svg><div class="title">VectorZ</div></div><svg class="abs" style="left:132.0px;top:11px" width="16" height="12" viewBox="0 0 16 12"><path d="M1.3 6 C3.5 2.2 5.6 1.2 8 1.2 C10.4 1.2 12.5 2.2 14.7 6 C12.5 9.8 10.4 10.8 8 10.8 C5.6 10.8 3.5 9.8 1.3 6 Z" fill="none" stroke="#eeeeee" stroke-width="1.2"/><circle cx="8" cy="6" r="1.9" fill="none" stroke="#eeeeee" stroke-width="1.2"/></svg><svg class="abs" style="left:161.3px;top:10px" width="6" height="14" viewBox="0 0 6 14"><circle cx="3" cy="2.8" r="1.1" fill="#eeeeee"/><circle cx="3" cy="7" r="1.1" fill="#eeeeee"/><circle cx="3" cy="11.2" r="1.1" fill="#eeeeee"/></svg><div class="port" style="left:-0.5px;top:42.8px;background:#37a9f2"></div><div class="sock in" style="left:2.5px;top:42.8px;width:59px">Factor</div><div class="port" style="left:185.0px;top:42.8px;background:#7fea7f"></div><div class="sock out sl" style="left:125.0px;top:42.8px;width:60px"><svg style="position:relative;top:1.5px;margin-right:4px" width="9.5" height="9.5" viewBox="0 0 10 10"><path d="M0.9 5.2 C2.4 2.9 3.7 2.3 5 2.3 C6.3 2.3 7.6 2.9 9.1 5.2 C7.6 7.5 6.3 8.1 5 8.1 C3.7 8.1 2.4 7.5 0.9 5.2Z" fill="none" stroke="#a3a9b1" stroke-width="1.05"/><circle cx="5" cy="5.2" r="1.3" fill="none" stroke="#a3a9b1" stroke-width="1.05"/><path d="M0.6 0.6 L9.4 9.4" stroke="#a3a9b1" stroke-width="1.05"/></svg>Vector</div></div></body></html>
